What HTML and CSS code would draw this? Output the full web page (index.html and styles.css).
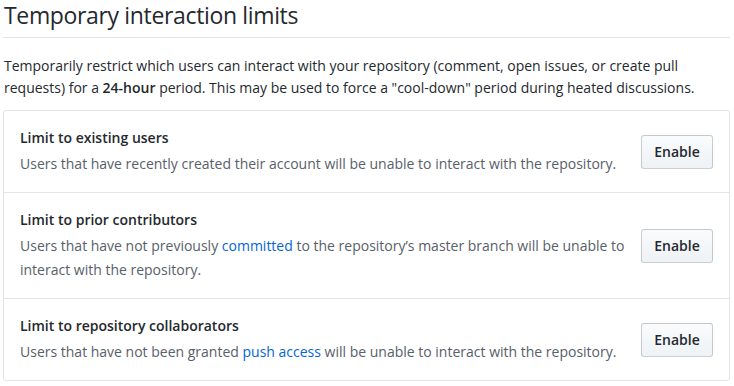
FILE: index.html
```html
<!DOCTYPE html>
<html>
<head>
<meta charset="utf-8">
<link rel="stylesheet" href="styles.css">
</head>
<body>
<div class="page">
  <div class="subhead">
    <h2 class="subhead-title">Temporary interaction limits</h2>
  </div>
  <p class="intro">Temporarily restrict which users can interact with your repository (comment, open issues, or create pull requests) for a <strong>24-hour</strong> period. This may be used to force a "cool-down" period during heated discussions.</p>
  <div class="box">
    <div class="box-row">
      <div class="row-text">
        <h4 class="row-title">Limit to existing users</h4>
        <p class="row-desc">Users that have recently created their account will be unable to interact with the repository.</p>
      </div>
      <button class="btn">Enable</button>
    </div>
    <div class="box-row">
      <div class="row-text">
        <h4 class="row-title">Limit to prior contributors</h4>
        <p class="row-desc">Users that have not previously <a href="#">committed</a> to the repository’s master branch will be unable to interact with the repository.</p>
      </div>
      <button class="btn">Enable</button>
    </div>
    <div class="box-row">
      <div class="row-text">
        <h4 class="row-title">Limit to repository collaborators</h4>
        <p class="row-desc">Users that have not been granted <a href="#">push access</a> will be unable to interact with the repository.</p>
      </div>
      <button class="btn">Enable</button>
    </div>
  </div>
</div>
</body>
</html>
```
FILE: styles.css
```css
* { box-sizing: border-box; }
html, body { margin: 0; padding: 0; background: #fff; }
body {
  font-family: "Open Sans", "Noto Sans", sans-serif;
  font-size: 14px;
  color: #24292e;
}
.page {
  width: 727px;
  margin-left: 3px;
}
.subhead {
  border-bottom: 1px solid #e1e4e8;
  padding-bottom: 7px;
}
.subhead-title {
  margin: 0;
  font-size: 23px;
  letter-spacing: -0.35px;
  font-weight: 400;
  line-height: 30px;
  padding-left: 1px;
}
.intro {
  margin: 17px 0 11px;
  line-height: 22px;
  padding-left: 1px;
}
.intro strong { font-weight: 600; }
.box {
  border: 1px solid #e1e4e8;
  border-radius: 3px;
}
.box-row {
  display: flex;
  align-items: center;
  padding: 16px;
  border-top: 1px solid #e1e4e8;
}
.box-row:first-child { border-top: 0; }
.row-text { flex: 1; min-width: 0; }
.row-title {
  margin: 0 0 4px;
  font-size: 14px;
  font-weight: 600;
  line-height: 21px;
}
.row-desc {
  margin: 0;
  color: #586069;
  line-height: 24px;
}
.row-desc a { color: #0366d6; text-decoration: none; }
.btn {
  flex: none;
  margin-left: 10px;
  width: 72px;
  height: 34px;
  font-family: inherit;
  font-size: 14px;
  font-weight: 600;
  color: #24292e;
  background: linear-gradient(-180deg, #fafbfc 0%, #eff3f6 90%);
  border: 1px solid rgba(27,31,35,0.2);
  border-radius: 3px;
  padding: 0;
}
```
